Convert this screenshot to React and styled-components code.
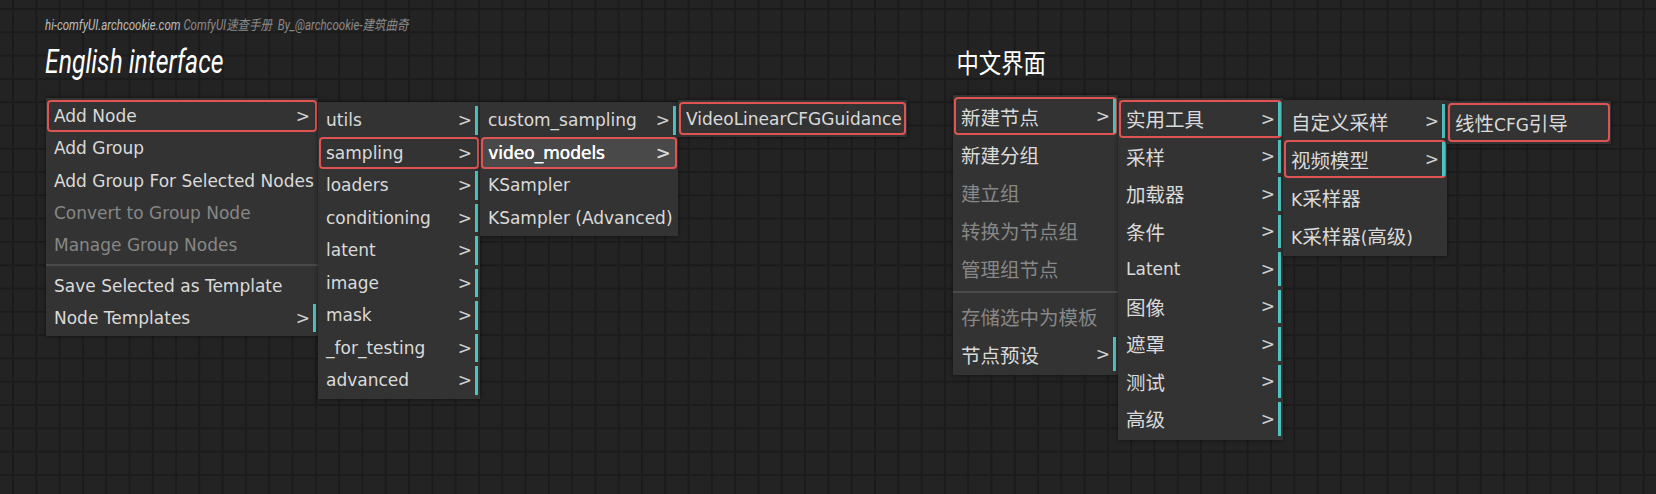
import React from "react";
import styled, { createGlobalStyle, css } from "styled-components";

const GlobalStyle = createGlobalStyle`
  html, body { margin: 0; padding: 0; }
  body {
    background-color: #232323;
    background-image:
      linear-gradient(#1b1b1b 2px, transparent 2px),
      linear-gradient(90deg, #1b1b1b 2px, transparent 2px);
    background-size: 23.3px 23.3px;
    background-position: 12px 8px;
  }
`;

const MENU_FONT = `"DejaVu Sans", Verdana, "Noto Sans CJK SC", sans-serif`;

const Canvas = styled.div`
  box-sizing: border-box;
  width: 1656px;
  min-height: 494px;
  padding: 16px 0 0 45px;
  overflow: hidden;
`;

const Credit = styled.div`
  display: inline-block;
  font-family: Roboto, "Noto Sans CJK SC", sans-serif;
  font-style: italic;
  font-size: 14px;
  line-height: 18px;
  color: #8a8a8a;
  white-space: nowrap;
  transform: scaleX(0.82);
  transform-origin: left center;
`;

const Site = styled.span`
  color: #bdbdbd;
`;

const Sections = styled.div`
  display: grid;
  grid-template-columns: 908px 1fr;
  margin-top: 9px;
`;

const Section = styled.div`
  display: flex;
  flex-direction: column;
  align-items: flex-start;
`;

const Title = styled.div`
  display: inline-block;
  color: #ffffff;
  line-height: 38px;
  white-space: nowrap;
  transform-origin: left center;
  ${(p) =>
    p.$cjk
      ? css`
          font-family: "Noto Sans CJK SC", sans-serif;
          font-size: 26px;
          padding-left: 4px;
          transform: scaleX(0.86);
        `
      : css`
          font-family: Roboto, sans-serif;
          font-style: italic;
          font-size: 33px;
          transform: scaleX(0.75);
        `}
`;

const Cascade = styled.div`
  display: flex;
  align-items: flex-start;
  margin-top: 14px;
  margin-left: ${(p) => p.$indent || 0}px;
`;

const Menu = styled.div`
  box-sizing: border-box;
  width: ${(p) => p.$w}px;
  margin-top: ${(p) => p.$top}px;
  padding: 2px 1px;
  background: #333333;
  box-shadow: 0 0 4px rgba(0, 0, 0, 0.55);
  display: flex;
  flex-direction: column;
  font-family: ${MENU_FONT};
  font-size: 17px;
`;

const Row = styled.div`
  box-sizing: border-box;
  height: ${(p) => p.$h}px;
  display: flex;
  align-items: center;
  padding-left: 7px;
  border-radius: 4px;
  white-space: nowrap;
  color: ${(p) => (p.$disabled ? "#878787" : "#dadada")};
  ${(p) =>
    p.$active &&
    css`
      background: #494949;
      color: #ffffff;
      text-shadow: 0.5px 0 0 #ffffff;
    `}
  ${(p) =>
    p.$hl &&
    css`
      box-shadow: inset 0 0 0 2px #e05353;
    `}
`;

const Label = styled.span`
  flex: 1;
`;

const Cjk = styled.span`
  font-family: "Noto Sans CJK SC", sans-serif;
  font-size: 19.5px;
`;

const Arrow = styled.span`
  margin-right: 3px;
  color: #d0d0d0;
`;

const Bar = styled.span`
  width: 3px;
  height: calc(100% - 4px);
  margin-right: 1px;
  background: ${(p) => (p.$show ? "#4fc3c0" : "transparent")};
`;

const Separator = styled.div`
  height: 2px;
  margin: ${(p) => p.$gap}px -1px;
  background: #4a4a4a;
`;

const CJK_RE = /([\u3000-\u9fff\uff00-\uffef]+)/;

function renderText(text) {
  return text.split(CJK_RE).map((part, i) =>
    CJK_RE.test(part) ? <Cjk key={i}>{part}</Cjk> : part ? <React.Fragment key={i}>{part}</React.Fragment> : null
  );
}

const A = (t, extra = {}) => ({ t, arrow: true, bar: true, ...extra });

const english = [
  {
    w: 272,
    top: 3,
    h: 32.3,
    items: [
      { t: "Add Node", arrow: true, hl: true },
      { t: "Add Group" },
      { t: "Add Group For Selected Nodes" },
      { t: "Convert to Group Node", dis: true },
      { t: "Manage Group Nodes", dis: true },
      { sep: true },
      { t: "Save Selected as Template" },
      A("Node Templates"),
    ],
  },
  {
    w: 162,
    top: 7,
    h: 32.5,
    items: [
      A("utils"),
      A("sampling", { hl: true, bar: false }),
      A("loaders"),
      A("conditioning"),
      A("latent"),
      A("image"),
      A("mask"),
      A("_for_testing"),
      A("advanced"),
    ],
  },
  {
    w: 198,
    top: 7,
    h: 32.5,
    items: [
      A("custom_sampling"),
      A("video_models", { hl: true, active: true, bar: false }),
      { t: "KSampler" },
      { t: "KSampler (Advanced)" },
    ],
  },
  {
    w: 229,
    top: 5,
    h: 33,
    items: [{ t: "VideoLinearCFGGuidance", hl: true }],
  },
];

const chinese = [
  {
    w: 165,
    top: 0,
    h: 38,
    items: [
      A("新建节点", { hl: true }),
      { t: "新建分组" },
      { t: "建立组", dis: true },
      { t: "转换为节点组", dis: true },
      { t: "管理组节点", dis: true },
      { sep: true },
      { t: "存储选中为模板", dis: true },
      A("节点预设"),
    ],
  },
  {
    w: 165,
    top: 3,
    h: 37.5,
    items: [
      A("实用工具", { hl: true }),
      A("采样"),
      A("加载器"),
      A("条件"),
      A("Latent"),
      A("图像"),
      A("遮罩"),
      A("测试"),
      A("高级"),
    ],
  },
  {
    w: 164,
    top: 5,
    h: 38,
    items: [
      A("自定义采样"),
      A("视频模型", { hl: true }),
      { t: "K采样器" },
      { t: "K采样器(高级)" },
    ],
  },
  {
    w: 164,
    top: 6,
    h: 39,
    items: [{ t: "线性CFG引导", hl: true }],
  },
];

function ContextMenu({ menu, sepGap }) {
  return (
    <Menu $w={menu.w} $top={menu.top}>
      {menu.items.map((it, i) =>
        it.sep ? (
          <Separator key={i} $gap={sepGap} />
        ) : (
          <Row key={i} $h={menu.h} $hl={it.hl} $active={it.active} $disabled={it.dis}>
            <Label>{renderText(it.t)}</Label>
            {it.arrow && <Arrow>&gt;</Arrow>}
            {it.arrow && <Bar $show={it.bar} />}
          </Row>
        )
      )}
    </Menu>
  );
}

export default function App() {
  return (
    <>
      <GlobalStyle />
      <Canvas>
        <Credit>
          <Site>hi-comfyUI.archcookie.com</Site> ComfyUI速查手册 &nbsp;By_@archcookie-建筑曲奇
        </Credit>
        <Sections>
          <Section>
            <Title>English interface</Title>
            <Cascade $indent={1}>
              {english.map((m, i) => (
                <ContextMenu key={i} menu={m} sepGap={3} />
              ))}
            </Cascade>
          </Section>
          <Section>
            <Title $cjk>中文界面</Title>
            <Cascade>
              {chinese.map((m, i) => (
                <ContextMenu key={i} menu={m} sepGap={4} />
              ))}
            </Cascade>
          </Section>
        </Sections>
      </Canvas>
    </>
  );
}
